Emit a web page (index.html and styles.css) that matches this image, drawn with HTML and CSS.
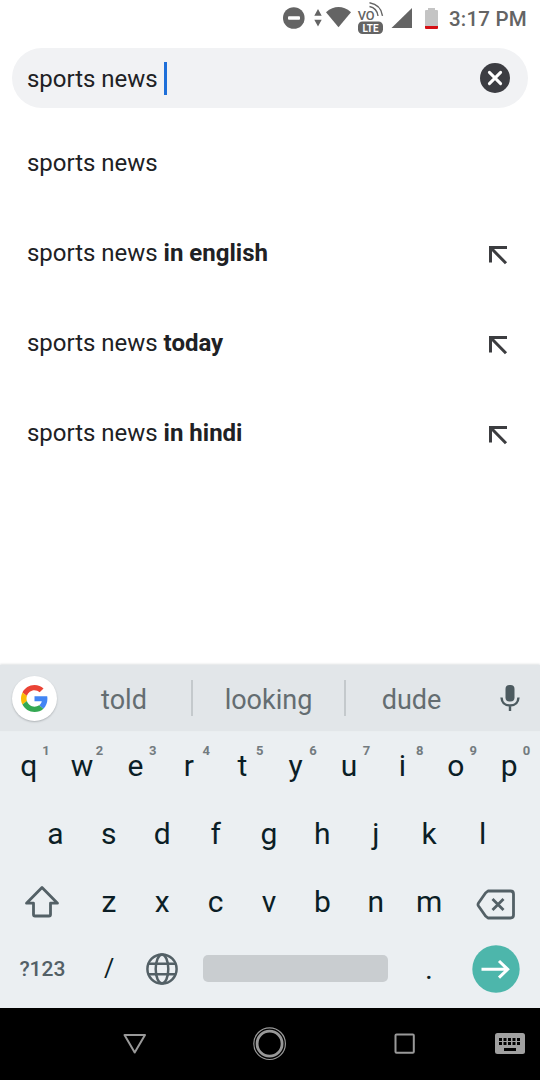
FILE: index.html
```html
<!DOCTYPE html>
<html lang="en">
<head>
<meta charset="utf-8">
<title>Search</title>
<link rel="stylesheet" href="styles.css">
</head>
<body>
<div class="screen">
  <header class="status">
    <svg class="status-icons" width="170" height="36" viewBox="270 0 170 36">
      <g fill="#646464">
        <circle cx="293.8" cy="18" r="10.8"/>
        <rect x="288" y="16.2" width="12" height="3.6" rx="1" fill="#fff"/>
        <path d="M314.3 15.8 318 9l3.7 6.8zM314.3 19.8h7.4L318 26.6z"/>
        <path d="M326 12.2Q338.500 2 351 12.200L338.500 27.200z"/>
        <path d="M391.500 28H412V8z"/>
        <rect x="358" y="21.500" width="25" height="12.500" rx="4.500"/>
      </g>
      <g fill="none" stroke="#646464" stroke-width="1.400">
        <path d="M369.500 6.500q7.500 1.500 8.500 9.500M369.500 2.800q11.500 2 13 13"/>
      </g>
      <text class="volte" x="357.700" y="19.500" textLength="17" lengthAdjust="spacingAndGlyphs">VO</text>
      <text class="lte" x="362.500" y="31.500" textLength="16" lengthAdjust="spacingAndGlyphs">LTE</text>
      <path fill="#c4c4c4" d="M428 8h7v2h2q1 0 1 1v15h-13V11q0-1 1-1h2z"/>
      <path fill="#d50f14" d="M425 26h13v2q0 1-1 1h-11q-1 0-1-1z"/>
    </svg>
    <span class="clock">3:17 PM</span>
  </header>

  <div class="search">
    <span class="query">sports news</span><span class="caret"></span>
    <svg class="clear" width="30" height="30" viewBox="0 0 30 30"><circle cx="15" cy="15" r="15" fill="#3c3d42"/><path d="M9.400 9.400 20.600 20.600M20.600 9.400 9.400 20.600" stroke="#fff" stroke-width="3" stroke-linecap="round"/></svg>
  </div>

  <ul class="suggestions">
    <li class="suggestion"><span>sports news</span></li>
    <li class="suggestion"><span>sports news <b>in english</b></span><svg class="insert" width="20" height="20" viewBox="0 0 20 20"><path d="M2.500 17.500V2.500H19M3 3 18 18.300"/></svg></li>
    <li class="suggestion"><span>sports news <b>today</b></span><svg class="insert" width="20" height="20" viewBox="0 0 20 20"><path d="M2.500 17.500V2.500H19M3 3 18 18.300"/></svg></li>
    <li class="suggestion"><span>sports news <b>in hindi</b></span><svg class="insert" width="20" height="20" viewBox="0 0 20 20"><path d="M2.500 17.500V2.500H19M3 3 18 18.300"/></svg></li>
  </ul>

  <section class="keyboard">
    <div class="strip">
      <div class="google"><svg width="27" height="27" viewBox="0 0 48 48">
        <path fill="#ea4335" d="M24 9.500c3.540 0 6.710 1.220 9.210 3.600l6.850-6.850C35.900 2.380 30.470 0 24 0 14.620 0 6.510 5.380 2.560 13.220l7.980 6.190C12.430 13.720 17.740 9.500 24 9.500z"/>
        <path fill="#4285f4" d="M46.980 24.550c0-1.570-.15-3.090-.38-4.550H24v9.020h12.940c-.58 2.960-2.260 5.480-4.780 7.180l7.730 6c4.510-4.180 7.090-10.360 7.090-17.650z"/>
        <path fill="#fbbc05" d="M10.530 28.590c-.48-1.450-.76-2.990-.76-4.590s.27-3.140.76-4.590l-7.980-6.190C.92 16.460 0 20.120 0 24c0 3.880.92 7.540 2.560 10.780l7.970-6.190z"/>
        <path fill="#34a853" d="M24 48c6.480 0 11.930-2.130 15.890-5.810l-7.730-6c-2.150 1.450-4.920 2.300-8.160 2.300-6.260 0-11.570-4.220-13.470-9.910l-7.980 6.190C6.510 42.620 14.620 48 24 48z"/>
      </svg></div>
      <span class="word word-first">told</span>
      <span class="word word-middle">looking</span>
      <span class="word">dude</span>
      <svg class="mic" width="20" height="27" viewBox="0 0 20 27"><rect x="5.500" y="0" width="9" height="16.500" rx="4" fill="#4d5b60"/><path d="M1.500 12.500q.5 8 8.500 8t8.500-8M10 20.500V26" fill="none" stroke="#4d5b60" stroke-width="2.400"/></svg>
    </div>
    <div class="row">
      <span class="key">q<sup>1</sup></span><span class="key">w<sup>2</sup></span><span class="key">e<sup>3</sup></span><span class="key">r<sup>4</sup></span><span class="key">t<sup>5</sup></span><span class="key">y<sup>6</sup></span><span class="key">u<sup>7</sup></span><span class="key">i<sup>8</sup></span><span class="key">o<sup>9</sup></span><span class="key">p<sup>0</sup></span>
    </div>
    <div class="row">
      <span class="key">a</span><span class="key">s</span><span class="key">d</span><span class="key">f</span><span class="key">g</span><span class="key">h</span><span class="key">j</span><span class="key">k</span><span class="key">l</span>
    </div>
    <div class="row">
      <span class="key wide"><svg width="36" height="34" viewBox="0 0 36 34"><path d="M18 2.500 2.500 18.200H9.500V29.500q0 1.500 1.500 1.500H25q1.500 0 1.500-1.500V18.200H33.500z"/></svg></span>
      <span class="key">z</span><span class="key">x</span><span class="key">c</span><span class="key">v</span><span class="key">b</span><span class="key">n</span><span class="key">m</span>
      <span class="key wide backspace"><svg width="40" height="32" viewBox="0 0 40 32"><path d="M12 2H34.500Q37.500 2 37.500 5V26Q37.500 29 34.500 29H12L9.500 27 2.500 17Q1.500 15.500 2.500 14L9.500 4zM16.500 10 27.500 21M27.500 10 16.500 21"/></svg></span>
    </div>
    <div class="row bottom">
      <span class="key wide symbols">?123</span>
      <span class="key slash">/</span>
      <span class="key"><svg width="34" height="34" viewBox="0 0 34 34"><g stroke-width="2.500"><circle cx="17" cy="17" r="14.600"/><ellipse cx="17" cy="17" rx="6.300" ry="14.600"/><path d="M3.500 11.700H30.500M3.500 22.300H30.500"/></g></svg></span>
      <span class="space"></span>
      <span class="key dot">.</span>
      <span class="key wide enter"><svg width="48" height="48" viewBox="0 0 48 48"><circle cx="24" cy="24" r="23.700" fill="#4db6ab" stroke="none"/><path d="M9.500 24.300H36M27 16 35.700 24.300 27 32.600"/></svg></span>
    </div>
  </section>

  <nav class="nav">
    <svg width="540" height="72" viewBox="0 0 540 72" fill="none" stroke="#999">
      <path d="M124.500 27H145L134.700 44.500z" stroke-width="2" stroke-linejoin="round"/>
      <circle cx="269.600" cy="35.700" r="15.800" stroke-width="1.200"/>
      <circle cx="269.600" cy="35.700" r="12.500" stroke-width="2.800"/>
      <rect x="395.500" y="26.500" width="18.300" height="18.300" rx="1" stroke-width="2"/>
      <rect x="495" y="25" width="30" height="21" rx="2.500" fill="#a0a0a0" stroke="none"/>
      <path d="M499 31.500H520M499 35.500H520" stroke="#000" stroke-width="3" stroke-dasharray="3 1.500"/>
      <path d="M504 41.500H516" stroke="#000" stroke-width="3"/>
    </svg>
  </nav>
</div>
</body>
</html>
```
FILE: styles.css
```css
* { box-sizing: border-box; }
body { margin: 0; background: #fff; font-family: Roboto, sans-serif; }
.screen { width: 540px; height: 1080px; display: flex; flex-direction: column; overflow: hidden; }

.status { height: 48px; flex: none; padding-left: 270px; display: flex; align-items: flex-start; }
.status-icons { flex: none; }
.clock { margin-left: 9px; font-size: 20.5px; font-weight: 500; line-height: 38px; color: #646464; white-space: nowrap; letter-spacing: .2px; }
.volte { font-size: 12.5px; font-weight: 500; fill: #646464; }
.lte { font-size: 10px; font-weight: 700; fill: #fff; }

.search { height: 60px; flex: none; margin: 0 12px; padding: 0 18px 0 15px; border-radius: 30px; background: #f1f2f4; display: flex; align-items: center; }
.query, .suggestion { font-size: 24px; color: #202124; letter-spacing: -.02px; white-space: nowrap; }
.query { padding-top: 2px; }
.caret { width: 3px; height: 33px; margin-left: 6px; background: #1e6fd9; }
.clear { margin-left: auto; }

.suggestions { flex: 1; margin: 0; padding: 10px 32px 0 27px; list-style: none; }
.suggestion { height: 90px; display: flex; align-items: center; justify-content: space-between; }
.suggestion b { font-weight: 700; letter-spacing: 0; }
.insert { margin-top: 3px; fill: none; stroke: #3c3d40; stroke-width: 3; }

.keyboard { height: 343px; flex: none; background: #ebeff2; }
.strip { height: 66px; margin-bottom: 1px; padding: 0 20px 0 12px; background: #e2e6e9; box-shadow: 0 -1px 2px #dfe2e4; display: flex; align-items: center; }
.google { width: 45px; height: 45px; border-radius: 50%; background: #fff; box-shadow: 0 1px 2px #aeb3b6; display: flex; align-items: center; justify-content: center; }
.word { width: 133px; font-size: 27px; line-height: 36px; text-align: center; color: #646d71; padding: 3px 2px 0 0; background: linear-gradient(#c4c9cc, #c4c9cc) right 1px / 0 36px no-repeat; }
.word-first { width: 136px; background-size: 2px 36px; }
.word-middle { width: 153px; background-size: 2px 36px; }
.mic { margin-left: auto; }

.row { height: 68px; padding: 0 3px 0 1px; display: flex; justify-content: center; align-items: center; }
.bottom { height: 65px; }
.key { position: relative; width: 53.4px; flex: none; font-size: 30px; line-height: 68px; text-align: center; color: #0b1e26; }
.key sup { position: absolute; left: 36px; top: 10px; width: 16px; font-size: 13px; line-height: 18px; font-weight: 700; color: #737b7f; }
.key svg { display: block; margin: 0 auto; fill: none; stroke: #536066; stroke-width: 2.8; stroke-linejoin: round; }
.wide { width: 80px; }
.wide svg { position: relative; left: 0; }
.backspace svg { margin: 5px 0 0 20px; }
.symbols { font-size: 21px; font-weight: 500; color: #536066; }
.slash { font-size: 25px; }
.space { width: 185px; height: 27px; margin: 0 14px; border-radius: 5px; background: #c9cdd0; }
.enter svg { stroke: #fff; stroke-width: 3; stroke-linejoin: miter; }

.nav { height: 72px; flex: none; background: #000; }
.nav svg { display: block; }
```
